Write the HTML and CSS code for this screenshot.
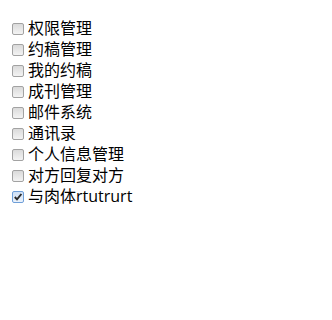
FILE: index.html
```html
<!DOCTYPE html>
<html>
<head>
<meta charset="utf-8">
<link rel="stylesheet" href="styles.css">
</head>
<body>
<div class="list">
  <label class="item"><input type="checkbox"><span class="box"></span>权限管理</label>
  <label class="item"><input type="checkbox"><span class="box"></span>约稿管理</label>
  <label class="item"><input type="checkbox"><span class="box"></span>我的约稿</label>
  <label class="item"><input type="checkbox"><span class="box"></span>成刊管理</label>
  <label class="item"><input type="checkbox"><span class="box"></span>邮件系统</label>
  <label class="item"><input type="checkbox"><span class="box"></span>通讯录</label>
  <label class="item"><input type="checkbox"><span class="box"></span>个人信息管理</label>
  <label class="item"><input type="checkbox"><span class="box"></span>对方回复对方</label>
  <label class="item"><input type="checkbox" checked><span class="box checked"><svg width="10" height="10" viewBox="0 0 10 10"><path d="M1.8 5 L4 7.4 L8.4 2" fill="none" stroke="#2a2a2a" stroke-width="1.9"/></svg></span>与肉体rtutrurt</label>
</div>
</body>
</html>
```
FILE: styles.css
```css
body {
  margin: 8px;
  background: #fff;
  font-family: "Open Sans", "Noto Sans CJK SC", sans-serif;
  font-size: 16px;
  color: #000;
}
.list {
  padding-top: 10px;
  display: flex;
  flex-direction: column;
}
.item {
  display: flex;
  align-items: center;
  height: 21px;
  line-height: 21px;
}
.item input {
  display: none;
}
.box {
  box-sizing: border-box;
  width: 12px;
  height: 12px;
  margin: 0 4px 0 4px;
  border: 1px solid #a2a2a2;
  border-radius: 2px;
  background: linear-gradient(#dadada, #f3f3f3);
  display: flex;
  align-items: center;
  justify-content: center;
}
.box.checked {
  border-color: #6f9fd8;
  background: linear-gradient(#cfe0f6, #eaf2fc);
}
.box svg {
  display: block;
}
```
